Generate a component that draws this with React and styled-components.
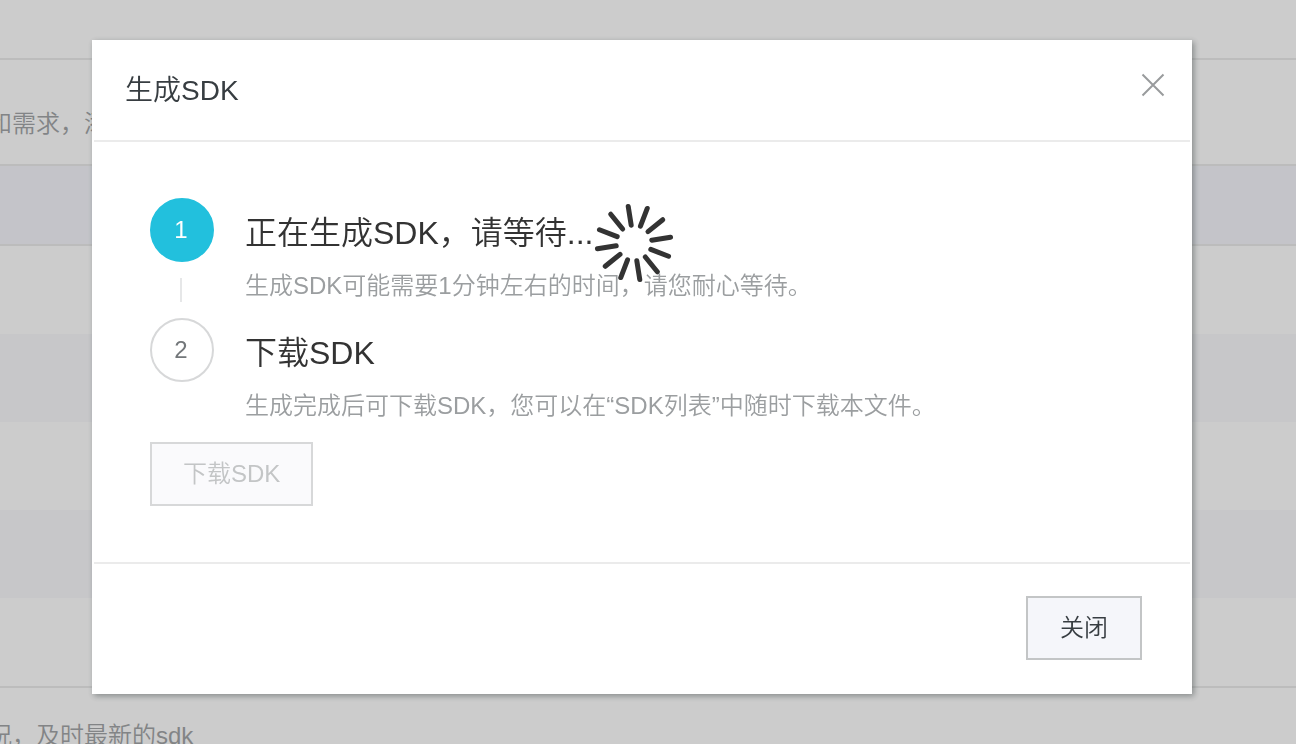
import React from "react";
import styled, { createGlobalStyle } from "styled-components";

const GlobalStyle = createGlobalStyle`
  * {
    box-sizing: border-box;
  }

  body {
    margin: 0;
    overflow: hidden;
    background-color: #ffffff;
    font-family: "Liberation Sans", "Noto Sans CJK SC", sans-serif;
    font-size: 24px;
    font-weight: 350;
  }

  h2, h3, p, ol {
    margin: 0;
    padding: 0;
    font-weight: 350;
  }

  button {
    font: inherit;
  }
`;

const Page = styled.div`
  min-height: 100vh;
  color: #a3a6a8;
`;

const TopBar = styled.div`
  height: 60px;
  border-bottom: 2px solid #ececec;
`;

const PageText = styled.p`
  padding: 46px 0 22px;
  margin-left: -12px;
  line-height: 36px;
  white-space: nowrap;
`;

const ListHead = styled.div`
  height: 82px;
  background-color: #f5f6fc;
  border: solid #ececec;
  border-width: 2px 0;
`;

const ListRow = styled.div`
  height: 88px;
  background-color: ${(props) => (props.$striped ? "#f9f9fc" : "#ffffff")};
`;

const ListEnd = styled.div`
  border-top: 2px solid #ececec;
  margin-bottom: -16px;
`;

const Overlay = styled.div`
  position: fixed;
  inset: 0;
  padding: 40px 104px 40px 92px;
  background-color: rgba(0, 0, 0, 0.2);
`;

const Dialog = styled.div`
  border: 2px solid #ffffff;
  background-color: #ffffff;
  box-shadow: 2px 2px 6px rgba(30, 40, 40, 0.4);
`;

const DialogHeader = styled.div`
  display: flex;
  justify-content: space-between;
  align-items: flex-start;
  padding: 28px 22px 28px 31px;
  border-bottom: 2px solid #ebebeb;
`;

const DialogTitle = styled.h2`
  color: #373d41;
  font-size: 28px;
  line-height: 42px;
`;

const CloseButton = styled.button`
  display: grid;
  place-items: center;
  width: 30px;
  height: 30px;
  padding: 0;
  border: none;
  background: none;
  color: #999b9d;
  cursor: pointer;
`;

const DialogBody = styled.div`
  padding: 56px;
`;

const DialogFooter = styled.div`
  display: flex;
  justify-content: flex-end;
  padding: 32px 48px;
  border-top: 2px solid #ebebeb;
`;

const Steps = styled.ol`
  list-style: none;
  margin-bottom: 18px;
`;

const Step = styled.li`
  display: flex;
  gap: 31px;
`;

const Marker = styled.div`
  display: flex;
  flex-direction: column;
  align-items: center;
`;

const Circle = styled.span`
  display: grid;
  place-items: center;
  width: 64px;
  height: 64px;
  padding-right: 2px;
  border: 2px solid ${(props) => (props.$active ? "#22c0dd" : "#d7d8d9")};
  border-radius: 50%;
  background-color: ${(props) => (props.$active ? "#22c0dd" : "#ffffff")};
  color: ${(props) => (props.$active ? "#ffffff" : "#73777a")};
`;

const Connector = styled.span`
  width: 2px;
  height: 24px;
  margin: 16px 2px 16px 0;
  background-color: #e6e7e8;
`;

const StepContent = styled.div`
  padding-top: 14px;
`;

const StepTitle = styled.h3`
  position: relative;
  width: fit-content;
  margin-bottom: 14px;
  color: #333333;
  font-size: 32px;
  line-height: 42px;
`;

const StepText = styled.p`
  color: #9b9ea0;
  line-height: 36px;
`;

const SpinnerIcon = styled.svg`
  position: absolute;
  left: 100%;
  top: -9px;
`;

const Button = styled.button`
  min-width: 116px;
  height: 64px;
  padding: 0 31px;
  border: 2px solid #c3c5c6;
  background-color: #f5f6fa;
  color: #373d41;
  line-height: 36px;
  cursor: pointer;

  &:disabled {
    border-color: #d7d8d9;
    background-color: #fafafc;
    color: #c3c5c6;
    cursor: default;
  }
`;

const spokes = [...Array(12).keys()].map((i) => i * 30 - 9);

function Spinner() {
  return (
    <SpinnerIcon width="82" height="80" viewBox="-41 -40 82 80" aria-hidden="true">
      {spokes.map((angle) => (
        <line
          key={angle}
          y1="-37"
          y2="-18"
          stroke="#333333"
          strokeWidth="5"
          strokeLinecap="round"
          transform={`rotate(${angle})`}
        />
      ))}
    </SpinnerIcon>
  );
}

function App() {
  return (
    <>
      <GlobalStyle />
      <Page>
        <TopBar />
        <PageText>和需求，添加</PageText>
        <ListHead />
        <ListRow />
        <ListRow $striped />
        <ListRow />
        <ListRow $striped />
        <ListRow />
        <ListEnd />
        <PageText>况，及时最新的sdk</PageText>
      </Page>
      <Overlay>
        <Dialog role="dialog" aria-labelledby="dialog-title">
          <DialogHeader>
            <DialogTitle id="dialog-title">生成SDK</DialogTitle>
            <CloseButton type="button" aria-label="关闭">
              <svg width="24" height="24" viewBox="0 0 24 24">
                <path d="M1.5 1.5 22.5 22.5M22.5 1.5 1.5 22.5" stroke="currentColor" strokeWidth="2" />
              </svg>
            </CloseButton>
          </DialogHeader>
          <DialogBody>
            <Steps>
              <Step>
                <Marker>
                  <Circle $active>1</Circle>
                  <Connector />
                </Marker>
                <StepContent>
                  <StepTitle>
                    正在生成SDK，请等待...
                    <Spinner />
                  </StepTitle>
                  <StepText>生成SDK可能需要1分钟左右的时间，请您耐心等待。</StepText>
                </StepContent>
              </Step>
              <Step>
                <Marker>
                  <Circle>2</Circle>
                </Marker>
                <StepContent>
                  <StepTitle>下载SDK</StepTitle>
                  <StepText>生成完成后可下载SDK，您可以在“SDK列表”中随时下载本文件。</StepText>
                </StepContent>
              </Step>
            </Steps>
            <Button type="button" disabled>
              下载SDK
            </Button>
          </DialogBody>
          <DialogFooter>
            <Button type="button">关闭</Button>
          </DialogFooter>
        </Dialog>
      </Overlay>
    </>
  );
}

export default App;
